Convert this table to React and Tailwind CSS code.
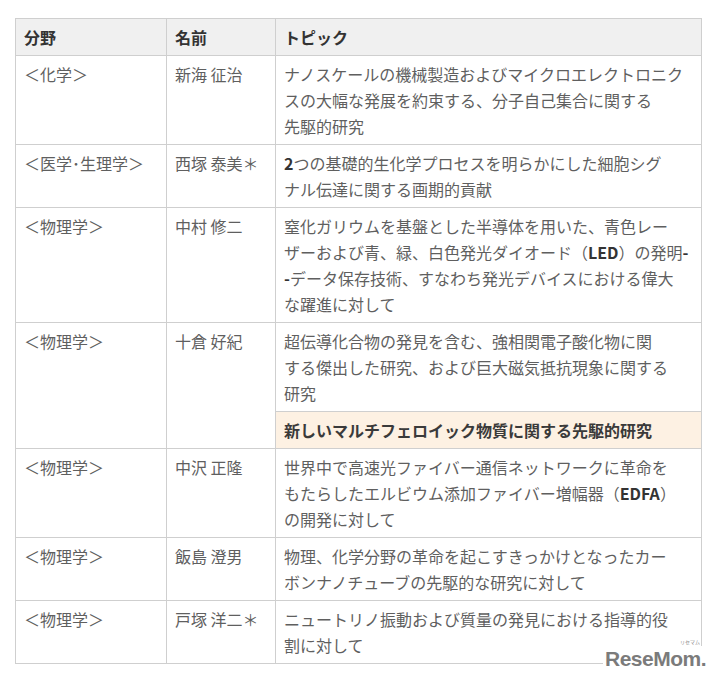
import React from 'react';

const rows = [
  {
    field: '＜化学＞',
    name: '新海 征治',
    topic: ['ナノスケールの機械製造およびマイクロエレクトロニク', 'スの大幅な発展を約束する、分子自己集合に関する', '先駆的研究'],
  },
  {
    field: '＜医学･生理学＞',
    name: '西塚 泰美＊',
    topic: [
      <><b className="font-bold text-[#333]">2</b>つの基礎的生化学プロセスを明らかにした細胞シグ</>,
      'ナル伝達に関する画期的貢献',
    ],
  },
  {
    field: '＜物理学＞',
    name: '中村 修二',
    topic: [
      '窒化ガリウムを基盤とした半導体を用いた、青色レー',
      <>ザーおよび青、緑、白色発光ダイオード（<b className="font-bold text-[#333]">LED</b>）の発明<b className="font-bold text-[#333]">-</b></>,
      <><b className="font-bold text-[#333]">-</b>データ保存技術、すなわち発光デバイスにおける偉大</>,
      'な躍進に対して',
    ],
  },
  {
    field: '＜物理学＞',
    name: '十倉 好紀',
    topic: ['超伝導化合物の発見を含む、強相関電子酸化物に関', 'する傑出した研究、および巨大磁気抵抗現象に関する', '研究'],
    extra: '新しいマルチフェロイック物質に関する先駆的研究',
  },
  {
    field: '＜物理学＞',
    name: '中沢 正隆',
    topic: [
      '世界中で高速光ファイバー通信ネットワークに革命を',
      <>もたらしたエルビウム添加ファイバー増幅器（<b className="font-bold text-[#333]">EDFA</b>）</>,
      'の開発に対して',
    ],
  },
  {
    field: '＜物理学＞',
    name: '飯島 澄男',
    topic: ['物理、化学分野の革命を起こすきっかけとなったカー', 'ボンナノチューブの先駆的な研究に対して'],
  },
  {
    field: '＜物理学＞',
    name: '戸塚 洋二＊',
    topic: ['ニュートリノ振動および質量の発見における指導的役', '割に対して'],
  },
];

const cell = 'border border-[#cfcfcf] px-[8px] py-[5px] align-top text-left';

const Topic = ({ lines }) => (
  <>
    {lines.map((l, i) => (
      <div key={i} className="whitespace-nowrap">{l}</div>
    ))}
  </>
);

export default function App() {
  return (
    <div
      className="relative w-[715px] h-[682px] bg-white overflow-hidden pt-[18px] pl-[15px]"
      style={{ fontFamily: '"Noto Sans CJK JP", "Noto Sans", sans-serif' }}
    >
      <table className="w-[687px] border-collapse table-fixed text-[16px] leading-[26px] text-[#5f5f5f]">
        <colgroup>
          <col className="w-[151px]" />
          <col className="w-[109px]" />
          <col />
        </colgroup>
        <thead>
          <tr className="bg-[#f0f0f0]">
            <th className={`${cell} py-[4px] font-bold text-[#333]`}>分野</th>
            <th className={`${cell} py-[4px] font-bold text-[#333]`}>名前</th>
            <th className={`${cell} py-[4px] font-bold text-[#333]`}>トピック</th>
          </tr>
        </thead>
        <tbody>
          {rows.map((r, i) => (
            <React.Fragment key={i}>
              <tr>
                <td className={`${cell} whitespace-nowrap`} rowSpan={r.extra ? 2 : 1}>{r.field}</td>
                <td className={`${cell} whitespace-nowrap`} rowSpan={r.extra ? 2 : 1}>{r.name}</td>
                <td className={cell}>
                  <Topic lines={r.topic} />
                </td>
              </tr>
              {r.extra && (
                <tr>
                  <td className={`${cell} py-[5px] bg-[#fdf1e3] font-bold text-[#3a3a3a] whitespace-nowrap`}>{r.extra}</td>
                </tr>
              )}
            </React.Fragment>
          ))}
        </tbody>
      </table>

      {/* watermark logo */}
      <div className="absolute left-[603px] top-[646px] w-[104px] h-[26px] bg-white">
        <div className="relative">
          <span className="absolute right-[7px] top-[-7px] text-[5px] leading-none text-[#888]">
            リセマム
          </span>
          <span
            className="absolute left-[2px] top-[2px] text-[21px] leading-none font-bold tracking-[-0.5px] text-[#7b7b7b]"
            style={{ fontFamily: '"Liberation Sans", Arial, sans-serif' }}
          >
            ReseMom.
          </span>
        </div>
      </div>
    </div>
  );
}
